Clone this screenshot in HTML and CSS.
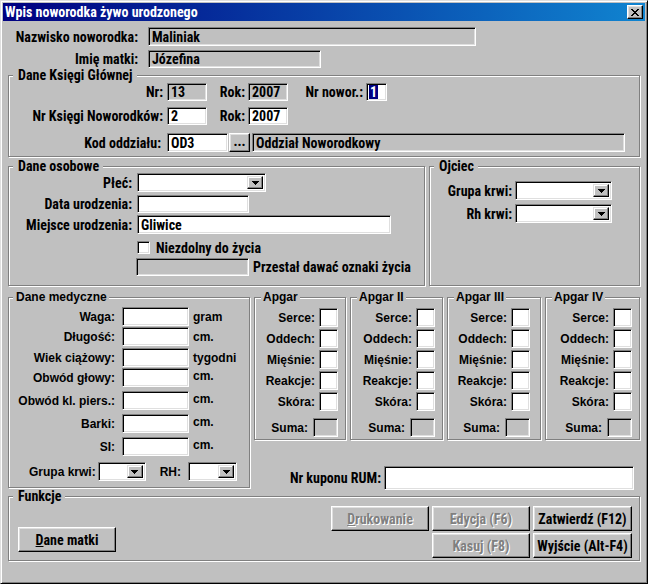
FILE: index.html
```html
<!DOCTYPE html>
<html lang="pl">
<head>
<meta charset="utf-8">
<title>Wpis noworodka żywo urodzonego</title>
<link rel="stylesheet" href="styles.css">
</head>
<body>
<div class="window">
  <div class="titlebar">
    <span class="title">Wpis noworodka żywo urodzonego</span>
    <span class="close-btn"><svg width="8" height="7" viewBox="0 0 8 7" shape-rendering="crispEdges"><path d="M0 0h2v1h-2z M6 0h2v1h-2z M1 1h2v1h-2z M5 1h2v1h-2z M2 2h4v1h-4z M3 3h2v1h-2z M2 4h4v1h-4z M1 5h2v1h-2z M5 5h2v1h-2z M0 6h2v1h-2z M6 6h2v1h-2z"/></svg></span>
  </div>
  <div class="content">
    <div class="top-row first">
      <span class="lbl top-lbl">Nazwisko noworodka:</span>
      <div class="field ro name-field">Maliniak</div>
    </div>
    <div class="top-row second">
      <span class="lbl top-lbl">Imię matki:</span>
      <div class="field ro mother-field">Józefina</div>
    </div>

    <fieldset class="group ksiegi">
      <legend>Dane Księgi Głównej</legend>
      <div class="k-row">
        <span class="lbl k-lbl">Nr:</span>
        <div class="field ro k-num">13</div>
        <span class="lbl k-rok">Rok:</span>
        <div class="field ro k-num">2007</div>
        <span class="lbl k-nowor">Nr nowor.:</span>
        <div class="field k-small"><span class="sel">1</span></div>
      </div>
      <div class="k-row k-row2">
        <span class="lbl k-lbl">Nr Księgi Noworodków:</span>
        <div class="field k-num">2</div>
        <span class="lbl k-rok">Rok:</span>
        <div class="field k-num">2007</div>
      </div>
      <div class="k-row k-row3">
        <span class="lbl k-lbl k-kodlbl">Kod oddziału:</span>
        <div class="field k-kod">OD3</div>
        <div class="btn k-dots">...</div>
        <div class="field ro k-oddzial">Oddział Noworodkowy</div>
      </div>
    </fieldset>

    <div class="mid-row">
      <fieldset class="group osobowe">
        <legend>Dane osobowe</legend>
        <div class="o-row o-first">
          <span class="lbl o-lbl">Płeć:</span>
          <div class="field combo o-plec"><span class="combo-btn"><svg width="7" height="4" viewBox="0 0 7 4" shape-rendering="crispEdges"><path d="M0 0h7v1h-1v1h-1v1h-1v1h-1v-1h-1v-1h-1v-1h-1z"/></svg></span></div>
        </div>
        <div class="o-row o-data">
          <span class="lbl o-lbl">Data urodzenia:</span>
          <div class="field o-datafield"></div>
        </div>
        <div class="o-row o-miejsce">
          <span class="lbl o-lbl">Miejsce urodzenia:</span>
          <div class="field o-miejscefield">Gliwice</div>
        </div>
        <div class="o-check">
          <span class="checkbox"></span>
          <span class="lbl">Niezdolny do życia</span>
        </div>
        <div class="o-przestal">
          <div class="field ro o-grayfield"></div>
          <span class="lbl o-przestal-txt">Przestał dawać oznaki życia</span>
        </div>
      </fieldset>

      <fieldset class="group ojciec">
        <legend>Ojciec</legend>
        <div class="oj-row oj-first">
          <span class="lbl oj-lbl">Grupa krwi:</span>
          <div class="field combo oj-combo"><span class="combo-btn"><svg width="7" height="4" viewBox="0 0 7 4" shape-rendering="crispEdges"><path d="M0 0h7v1h-1v1h-1v1h-1v1h-1v-1h-1v-1h-1v-1h-1z"/></svg></span></div>
        </div>
        <div class="oj-row oj-second">
          <span class="lbl oj-lbl">Rh krwi:</span>
          <div class="field combo oj-combo"><span class="combo-btn"><svg width="7" height="4" viewBox="0 0 7 4" shape-rendering="crispEdges"><path d="M0 0h7v1h-1v1h-1v1h-1v1h-1v-1h-1v-1h-1v-1h-1z"/></svg></span></div>
        </div>
      </fieldset>
    </div>

    <div class="low-row">
      <fieldset class="group medyczne wide">
        <legend>Dane medyczne</legend>
        <div class="m-row m1"><span class="lbl m-lbl">Waga:</span><div class="field m-field"></div><span class="m-unit">gram</span></div>
        <div class="m-row m2"><span class="lbl m-lbl">Długość:</span><div class="field m-field"></div><span class="m-unit">cm.</span></div>
        <div class="m-row m3"><span class="lbl m-lbl">Wiek ciążowy:</span><div class="field m-field"></div><span class="m-unit">tygodni</span></div>
        <div class="m-row m4"><span class="lbl m-lbl">Obwód głowy:</span><div class="field m-field"></div><span class="m-unit up">cm.</span></div>
        <div class="m-row m5"><span class="lbl m-lbl">Obwód kl. piers.:</span><div class="field m-field"></div><span class="m-unit up">cm.</span></div>
        <div class="m-row m5"><span class="lbl m-lbl">Barki:</span><div class="field m-field"></div><span class="m-unit up">cm.</span></div>
        <div class="m-row m5"><span class="lbl m-lbl">SI:</span><div class="field m-field"></div><span class="m-unit up">cm.</span></div>
        <div class="m-blood">
          <span class="lbl">Grupa krwi:</span>
          <div class="field combo m-combo1"><span class="combo-btn"><svg width="7" height="4" viewBox="0 0 7 4" shape-rendering="crispEdges"><path d="M0 0h7v1h-1v1h-1v1h-1v1h-1v-1h-1v-1h-1v-1h-1z"/></svg></span></div>
          <span class="lbl m-rh">RH:</span>
          <div class="field combo m-combo2"><span class="combo-btn"><svg width="7" height="4" viewBox="0 0 7 4" shape-rendering="crispEdges"><path d="M0 0h7v1h-1v1h-1v1h-1v1h-1v-1h-1v-1h-1v-1h-1z"/></svg></span></div>
        </div>
      </fieldset>

      <div class="right-col">
        <div class="apgar-grid">
          <fieldset class="group apgar wide">
            <legend>Apgar</legend>
            <div class="a-row a-first"><span class="lbl">Serce:</span><div class="field a-box"></div></div>
            <div class="a-row"><span class="lbl">Oddech:</span><div class="field a-box"></div></div>
            <div class="a-row"><span class="lbl">Mięśnie:</span><div class="field a-box"></div></div>
            <div class="a-row"><span class="lbl">Reakcje:</span><div class="field a-box"></div></div>
            <div class="a-row"><span class="lbl">Skóra:</span><div class="field a-box"></div></div>
            <div class="a-row a-sum"><span class="lbl">Suma:</span><div class="field ro a-sumbox"></div></div>
          </fieldset>
          <fieldset class="group apgar wide">
            <legend>Apgar II</legend>
            <div class="a-row a-first"><span class="lbl">Serce:</span><div class="field a-box"></div></div>
            <div class="a-row"><span class="lbl">Oddech:</span><div class="field a-box"></div></div>
            <div class="a-row"><span class="lbl">Mięśnie:</span><div class="field a-box"></div></div>
            <div class="a-row"><span class="lbl">Reakcje:</span><div class="field a-box"></div></div>
            <div class="a-row"><span class="lbl">Skóra:</span><div class="field a-box"></div></div>
            <div class="a-row a-sum"><span class="lbl">Suma:</span><div class="field ro a-sumbox"></div></div>
          </fieldset>
          <fieldset class="group apgar apgar-3 wide">
            <legend>Apgar III</legend>
            <div class="a-row a-first"><span class="lbl">Serce:</span><div class="field a-box"></div></div>
            <div class="a-row"><span class="lbl">Oddech:</span><div class="field a-box"></div></div>
            <div class="a-row"><span class="lbl">Mięśnie:</span><div class="field a-box"></div></div>
            <div class="a-row"><span class="lbl">Reakcje:</span><div class="field a-box"></div></div>
            <div class="a-row"><span class="lbl">Skóra:</span><div class="field a-box"></div></div>
            <div class="a-row a-sum"><span class="lbl">Suma:</span><div class="field ro a-sumbox"></div></div>
          </fieldset>
          <fieldset class="group apgar wide">
            <legend>Apgar IV</legend>
            <div class="a-row a-first"><span class="lbl">Serce:</span><div class="field a-box"></div></div>
            <div class="a-row"><span class="lbl">Oddech:</span><div class="field a-box"></div></div>
            <div class="a-row"><span class="lbl">Mięśnie:</span><div class="field a-box"></div></div>
            <div class="a-row"><span class="lbl">Reakcje:</span><div class="field a-box"></div></div>
            <div class="a-row"><span class="lbl">Skóra:</span><div class="field a-box"></div></div>
            <div class="a-row a-sum"><span class="lbl">Suma:</span><div class="field ro a-sumbox"></div></div>
          </fieldset>
        </div>
        <div class="kupon-row">
          <span class="lbl kupon-lbl">Nr kuponu RUM:</span>
          <div class="field kupon-field"></div>
        </div>
      </div>
    </div>

    <fieldset class="group funkcje">
      <legend>Funkcje</legend>
      <div class="f-inner">
        <div class="btn f-matki"><span><u>D</u>ane matki</span></div>
        <div class="f-buttons">
          <div class="btn disabled"><span><u>D</u>rukowanie</span></div>
          <div class="btn disabled">Edycja (F6)</div>
          <div class="btn">Zatwierdź (F12)</div>
          <div class="btn disabled f-kasuj">Kasuj (F8)</div>
          <div class="btn">Wyjście (Alt-F4)</div>
        </div>
      </div>
    </fieldset>
  </div>
</div>
</body>
</html>
```

FILE: styles.css
```css
* { box-sizing: border-box; }

html, body {
  margin: 0;
  padding: 0;
  background: #c0c0c0;
}

body {
  font-family: "Roboto Condensed", "Liberation Sans Narrow", "Arial Narrow", sans-serif;
  font-weight: bold;
  font-size: 14px;
  color: #000;
}

.window {
  width: 648px;
  height: 584px;
  padding: 2px;
  background: #c0c0c0;
  border: 1px solid;
  border-color: #dfdfdf #000 #000 #dfdfdf;
  box-shadow: inset 1px 1px #fff, inset -1px -1px #808080;
}

/* ---------- title bar ---------- */
.titlebar {
  height: 18px;
  display: flex;
  align-items: center;
  justify-content: space-between;
  padding: 0 2px 0 2px;
  background: linear-gradient(90deg, #000080, #1084d0);
  color: #fff;
}

.title {
  font-size: 14px;
  line-height: 18px;
  white-space: nowrap;
}

.close-btn {
  width: 16px;
  height: 14px;
  display: flex;
  align-items: center;
  justify-content: center;
  background: #c0c0c0;
  border: 1px solid;
  border-color: #fff #000 #000 #fff;
  box-shadow: inset -1px -1px #808080, inset 1px 1px #dfdfdf;
}

/* ---------- generic controls ---------- */
.content {
  padding: 0 5px;
}

.lbl {
  white-space: nowrap;
  line-height: 16px;
}

.field {
  display: flex;
  align-items: center;
  padding-left: 3px;
  background: #fff;
  border: 1px solid;
  border-color: #808080 #fff #fff #808080;
  box-shadow: inset 1px 1px #000, inset -1px -1px #dfdfdf;
  white-space: nowrap;
  overflow: hidden;
}

.field.ro {
  background: #c0c0c0;
}

.sel {
  background: #000080;
  color: #fff;
  line-height: 14px;
  padding: 0 1px;
}

.btn {
  display: flex;
  align-items: center;
  justify-content: center;
  background: #c0c0c0;
  border: 1px solid;
  border-color: #fff #000 #000 #fff;
  box-shadow: inset -1px -1px #808080, inset 1px 1px #dfdfdf;
  white-space: nowrap;
}

.btn.disabled {
  color: #808080;
  text-shadow: 1px 1px 0 #fff;
}

.combo {
  justify-content: flex-end;
  padding: 2px;
}

.combo-btn {
  width: 16px;
  height: 100%;
  display: flex;
  align-items: center;
  justify-content: center;
  background: #c0c0c0;
  border: 1px solid;
  border-color: #dfdfdf #000 #000 #dfdfdf;
  box-shadow: inset -1px -1px #808080, inset 1px 1px #fff;
}

.checkbox {
  width: 13px;
  height: 13px;
  background: #fff;
  border: 1px solid;
  border-color: #808080 #fff #fff #808080;
  box-shadow: inset 1px 1px #000, inset -1px -1px #dfdfdf;
}

/* ---------- group boxes ---------- */
.group {
  margin: 0;
  padding: 0;
  min-width: 0;
  border: 1px solid #808080;
  box-shadow: inset 1px 1px #fff, 1px 1px 0 #fff;
}

.group > legend {
  margin-left: 4px;
  padding: 0 4px 0 5px;
  height: 13px;
  line-height: 13px;
  background: #c0c0c0;
  white-space: nowrap;
}

.wide,
.wide > legend {
  font-family: "Liberation Sans", Arial, sans-serif;
  font-size: 12px;
}

/* ---------- top rows ---------- */
.top-row {
  display: flex;
  align-items: center;
}

.top-row.first { margin-top: 6px; }
.top-row.second { margin-top: 4px; }

.top-lbl {
  width: 130px;
  text-align: right;
  margin-right: 10px;
}

.name-field { width: 328px; height: 19px; }
.mother-field { width: 173px; height: 18px; }

/* ---------- Dane Księgi Głównej ---------- */
.ksiegi {
  margin-top: 1px;
  padding: 1px 0 4px;
}

.k-row {
  display: flex;
  align-items: center;
  height: 18px;
}

.k-row2 { margin-top: 6px; }
.k-row3 { margin-top: 8px; height: 19px; }

.k-lbl {
  width: 154px;
  text-align: right;
  margin-right: 4px;
}

.k-kodlbl { padding-right: 2px; }

.k-num { width: 40px; height: 18px; }

.k-rok {
  width: 38px;
  text-align: right;
  margin-right: 3px;
}

.k-nowor {
  width: 75px;
  text-align: right;
  margin-right: 3px;
}

.k-small { width: 21px; height: 18px; padding-left: 2px; }
.k-kod { width: 61px; height: 19px; }

.k-dots {
  width: 21px;
  height: 19px;
  margin-left: 1px;
  padding-bottom: 3px;
}

.k-oddzial { width: 373px; height: 19px; margin-left: 2px; }

/* ---------- Dane osobowe / Ojciec ---------- */
.mid-row {
  display: flex;
  gap: 4px;
  margin-top: 3px;
}

.osobowe {
  width: 417px;
  padding: 0 0 9px;
}

.ojciec {
  flex: 1;
  padding: 0;
}

.o-row {
  display: flex;
  align-items: center;
}

.o-lbl {
  width: 123px;
  text-align: right;
  margin-right: 5px;
}

.o-plec { width: 129px; height: 19px; }
.o-data { margin-top: 3px; }
.o-datafield { width: 112px; height: 18px; }
.o-miejsce { margin-top: 2px; }
.o-miejscefield { width: 254px; height: 19px; }

.o-check {
  display: flex;
  align-items: center;
  gap: 6px;
  height: 15px;
  margin-top: 6px;
  padding-left: 128px;
}

.o-przestal {
  display: flex;
  align-items: center;
  margin-top: 3px;
  padding-left: 127px;
}

.o-grayfield { width: 113px; height: 18px; }
.o-przestal-txt { margin-left: 4px; }

.oj-row {
  display: flex;
  align-items: center;
}

.oj-first { margin-top: 8px; }
.oj-second { margin-top: 4px; }

.oj-lbl {
  width: 82px;
  text-align: right;
  margin-right: 3px;
}

.oj-combo { width: 97px; height: 19px; }

/* ---------- Dane medyczne ---------- */
.low-row {
  display: flex;
  align-items: flex-start;
  gap: 4px;
  margin-top: 5px;
}

.medyczne {
  width: 242px;
  padding: 0 0 6px;
}

.medyczne > legend {
  padding: 0 2px 0 3px;
}

.m-row {
  display: flex;
  align-items: center;
  height: 19px;
}

.m1 { margin-top: 3px; }
.m2 { margin-top: 1px; }
.m3 { margin-top: 2px; }
.m4 { margin-top: 1px; }
.m5 { margin-top: 4px; }

.m-lbl {
  width: 106px;
  text-align: right;
  margin-right: 7px;
}

.m-field { width: 67px; height: 19px; }

.m-unit {
  margin-left: 4px;
  line-height: 16px;
}

.m-unit.up {
  align-self: flex-start;
}

.m-blood {
  display: flex;
  align-items: center;
  height: 19px;
  margin-top: 6px;
  padding-left: 20px;
}

.m-combo1 { width: 48px; height: 19px; margin-left: 2px; }
.m-rh { margin-left: 14px; }
.m-combo2 { width: 49px; height: 19px; margin-left: 7px; }

/* ---------- Apgar ---------- */
.right-col {
  flex: 1;
  min-width: 0;
}

.apgar-grid {
  display: grid;
  grid-template-columns: 92px 93px 94px 95px;
  column-gap: 4px;
}

.apgar {
  padding: 0 7px 2px 0;
}

.apgar-3 { padding-right: 10px; }

.apgar > legend {
  margin-left: 6px;
  padding: 0 2px;
}

.a-row {
  display: flex;
  justify-content: flex-end;
  align-items: center;
  height: 19px;
  margin-top: 2px;
}

.a-row.a-first { margin-top: 4px; }
.a-row.a-sum { margin-top: 7px; }

.a-box { width: 19px; height: 19px; margin-left: 4px; }
.a-sumbox { width: 25px; height: 19px; margin-left: 5px; }

.kupon-row {
  display: flex;
  justify-content: flex-end;
  align-items: center;
  margin-top: 26px;
  padding-right: 6px;
}

.kupon-lbl { margin-right: 3px; }
.kupon-field { width: 250px; height: 24px; }

/* ---------- Funkcje ---------- */
.funkcje {
  padding: 0 0 2px;
}

.f-inner {
  display: flex;
  align-items: flex-start;
}

.f-matki {
  width: 98px;
  height: 25px;
  margin-top: 24px;
  margin-left: 9px;
}

.f-buttons {
  display: grid;
  grid-template-columns: 98px 98px 99px;
  grid-auto-rows: 25px;
  column-gap: 3px;
  row-gap: 2px;
  margin-left: auto;
  margin-right: 7px;
  margin-top: 3px;
}

.f-kasuj { grid-column: 2; }
```
